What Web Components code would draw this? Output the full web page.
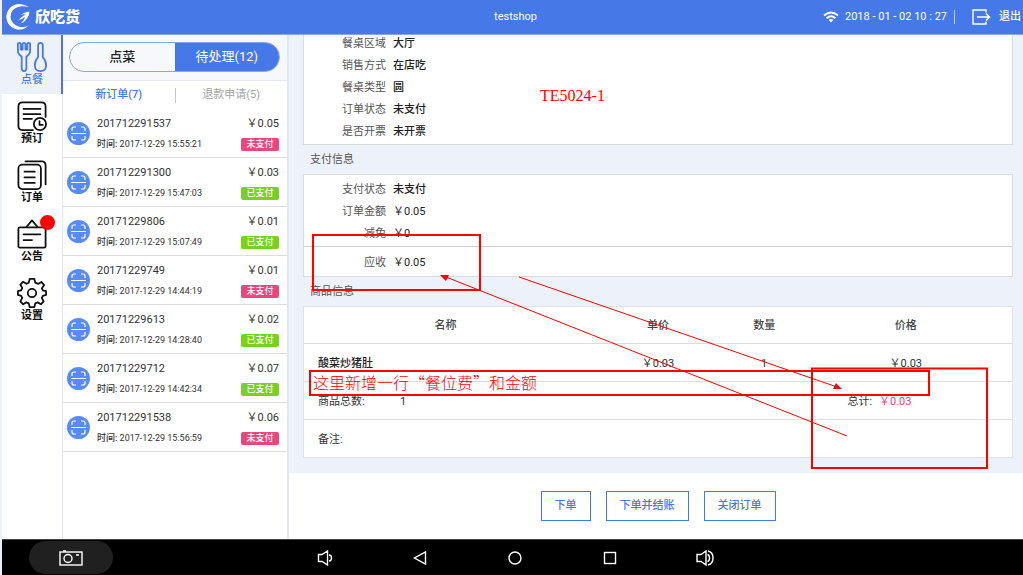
<!DOCTYPE html>
<html lang="zh-CN">
<head>
<meta charset="utf-8">
<title>欣吃货</title>
<style>
  html, body { margin: 0; height: 100%; }
  body {
    display: grid;
    font: 11px/16px Roboto, "Noto Sans CJK SC", sans-serif;
    color: #333;
    background: #edf2fa;
  }
</style>
</head>
<body>
<pos-app></pos-app>

<script>
const define = (name, html, setup) => {
  const template = document.createElement('template');
  template.innerHTML = html;
  customElements.define(name, class extends HTMLElement {
    constructor() {
      super();
      this.attachShadow({ mode: 'open' }).append(template.content.cloneNode(true));
    }
    connectedCallback() { if (setup) setup(this, this.shadowRoot); }
  });
};

/* ---------- top bar ---------- */
define('top-bar', `
<style>
  :host { display: grid; grid-template-columns: 1fr auto 1fr; align-items: center; height: 34px; background: #4778e7; border-bottom: 1px solid #86a6ee; color: #fff; }
  .brand { display: flex; align-items: center; gap: 4px; padding-left: 2px; font-size: 15px; line-height: 20px; font-weight: 900; }
  .title { padding-left: 6px; }
  .right { display: flex; justify-content: flex-end; align-items: center; padding-right: 2px; }
  .right svg { display: block; }
  time { margin: 0 7px 0 6px; white-space: pre; }
  i { width: 1px; height: 14px; background: #b9ccf7; margin-right: 17px; }
  a { display: flex; align-items: center; gap: 8px; color: #fff; text-decoration: none; font-weight: 500; }
</style>
<div class="brand">
  <svg width="27" height="28" viewBox="0 0 27 28" fill="#fff">
    <path d="M25 4.500Q21 1 14.500 1A12.800 12.800 0 1 0 24.500 22.500Q20 25 14.500 23.500Q7 20.500 6.500 14Q7 6 14 4Q19.500 2.500 25 4.500Z"/>
    <path d="M16.500 12Q20 9 25.500 8.500Q25.500 12.500 23 15.500Q21 19 16.500 20.500Q20.500 17 21 14Q18 16.500 14.500 17Q18 13.500 21.500 11.500Q19 11 16.500 12Z"/>
  </svg>
  <span>欣吃货</span>
</div>
<div class="title">testshop</div>
<div class="right">
  <svg width="16" height="12" viewBox="0 0 16 12" fill="none" stroke="#fff" stroke-width="2">
    <path d="M1 4.500Q8-1.500 15 4.500M3.500 7.200Q8 3.200 12.500 7.200"/><path d="M5.600 8.900Q8 7 10.400 8.900L8 11.500Z" fill="#fff" stroke="none"/>
  </svg>
  <time>2018 - 01 - 02 10 : 27</time><i></i>
  <a href="#exit">
    <svg width="19" height="16" viewBox="0 0 19 16" fill="none" stroke="#fff" stroke-width="1.400"><path d="M14 3.500V1H1V15H14V12.500M5 8H17.500M14 4.500L17.500 8L14 11.500"/></svg>
    <span>退出</span>
  </a>
</div>`);

/* ---------- side navigation ---------- */
define('side-item', `
<style>
  :host { display: block; height: 59px; color: #111; }
  a { display: flex; flex-direction: column; align-items: center; box-sizing: border-box; height: 100%; padding-top: 7px; color: inherit; text-decoration: none; font-weight: 700; border-right: 1px solid #e3e6ec; position: relative; }
  ::slotted(svg) { display: block; width: 30px; height: 30px; }
  :host([active]) { color: #4778e7; background: #edf2fa; }
  :host([active]) a { border-right-color: #4778e7; box-shadow: inset -1px 0 #4778e7; font-weight: 500; }
  b { display: none; position: absolute; right: 7px; top: 3px; width: 15px; height: 15px; border-radius: 50%; background: #f00; }
  :host([alert]) b { display: block; }
</style>
<a href="#"><slot name="icon"></slot><span><slot></slot></span><b></b></a>`);

define('side-nav', `
<style>
  :host { display: flex; flex-direction: column; background: #fff; }
  .rest { flex: 1; border-right: 1px solid #e3e6ec; }
  svg { fill: none; stroke: currentColor; stroke-width: 1.900; stroke-linecap: round; stroke-linejoin: round; }
</style>
<side-item active><svg slot="icon" viewBox="0 0 32 32"><path d="M1 2V9Q1 13 5 15.500V28Q5 31 7.500 31Q10 31 10 28V15.500Q14 13 14 9V2Q14 1 12.500 1Q11 1 11 2V8H9V2Q9 1 7.500 1Q6 1 6 2V8H4V2Q4 1 2.500 1Q1 1 1 2ZM25 1Q27.500 1 27.500 4V16Q31 20 31 25Q31 31 25 31Q19 31 19 25Q19 20 22.500 16V4Q22.500 1 25 1Z"/></svg>点餐</side-item>
<side-item><svg slot="icon" viewBox="0 0 32 32"><path d="M17 31H6Q1.500 31 1.500 27V6Q1.500 1.500 6 1.500H26Q30.500 1.500 30.500 6V17M7 8.500H25M7 14H25M7 19H16"/><circle cx="24.500" cy="24.500" r="6.500"/><path d="M24 21.500V25.500H27.500"/></svg>预订</side-item>
<side-item><svg slot="icon" viewBox="0 0 32 32"><rect x="1.500" y="5" width="24" height="26" rx="4"/><path d="M9 1.500H27Q30.500 2 30.500 6V26M8 12.500H19M8 18.500H19M8 24.500H19"/></svg>订单</side-item>
<side-item alert><svg slot="icon" viewBox="0 0 32 32"><rect x="1.500" y="9" width="29" height="21.500" rx="1.500"/><path d="M10 8.500L16 1.500L22 8.500M7 16.500H25M7 22.500H16"/></svg>公告</side-item>
<side-item><svg slot="icon" viewBox="0 0 32 32"><circle cx="16" cy="16" r="4.500"/><path d="M13.500 1H18.500L19.500 5L22.500 6.300L26 4.200L29 7.500L26.500 11L27.500 13.200L31 14V18L27.500 19L26.500 21.500L28.500 25L25.500 28L22 26L19.500 27L18.500 31H13.500L12.500 27L10 26L6.500 28L3.500 25L5.500 21.500L4.500 19L1 18V14L4.500 13.200L5.500 10.500L3.500 7L6.500 4L10 6.200L12.500 5Z"/></svg>设置</side-item>
<div class="rest"></div>`);

/* ---------- order list ---------- */
define('order-row', `
<style>
  :host { display: grid; grid-template-columns: 23px 1fr auto; align-items: center; column-gap: 7px; box-sizing: border-box; height: 49px; padding: 0 8px 0 4px; border-bottom: 1px solid #dcdcdc; }
  .text, .side { display: flex; flex-direction: column; gap: 4px; padding-top: 2px; }
  .side { align-items: flex-end; }
  .when { font-size: 9px; }
  .when b { font-weight: 500; }
  .state { display: flex; height: 16px; align-items: center; }
  .state span { width: 38px; height: 13px; line-height: 13px; border-radius: 2px; background: #e8467c; color: #fff; font-size: 9px; font-weight: 500; text-align: center; }
  :host([paid]) .state span { background: #7ad022; }
  svg { display: block; }
</style>
<svg width="23" height="23" viewBox="0 0 23 23"><circle cx="11.500" cy="11.500" r="11.500" fill="#588bfa"/><path d="M5 9V7Q5 5 7 5H9M14 5H16Q18 5 18 7V9M5 14V16Q5 18 7 18H9M14 18H16Q18 18 18 16V14M4 11.500H19" fill="none" stroke="#fff" stroke-width="1.200"/></svg>
<div class="text"><span class="no"></span><span class="when"><b>时间:</b> <span class="t"></span></span></div>
<div class="side"><span class="price"></span><span class="state"><span class="s"></span></span></div>`,
(el, root) => {
  root.querySelector('.no').textContent = el.getAttribute('no');
  root.querySelector('.t').textContent = '2017-12-29 ' + el.getAttribute('time');
  root.querySelector('.price').textContent = '￥' + el.getAttribute('price');
  root.querySelector('.s').textContent = el.hasAttribute('paid') ? '已支付' : '未支付';
});

define('order-panel', `
<style>
  :host { display: block; background: #fff; border-right: 2px solid #e3e6ec; }
  button { font: inherit; background: none; border: 0; padding: 0; color: inherit; }
  .modes { background: #f7f8fc; padding: 7px 7px 8px 6px; border-bottom: 1px solid #e3e6ec; }
  .pill { display: grid; grid-template-columns: 1fr 1fr; height: 30px; box-sizing: border-box; border: 1px solid #86a6ee; border-radius: 15px; overflow: hidden; font-size: 13px; color: #222; }
  .pill button { font-weight: 500; }
  .pill .on { background: #4778e7; color: #fff; font-weight: 400; }
  .kinds { display: grid; grid-template-columns: 1fr 1px 1fr; align-items: center; height: 28px; color: #a3a3a3; }
  .kinds .on { color: #4778e7; font-weight: 500; }
  .kinds i { height: 15px; background: #c4c4c4; }
</style>
<div class="modes"><div class="pill"><button>点菜</button><button class="on">待处理(12)</button></div></div>
<div class="kinds"><button class="on">新订单(7)</button><i></i><button>退款申请(5)</button></div>
<order-row no="201712291537" price="0.05" time="15:55:21"></order-row>
<order-row no="201712291300" price="0.03" time="15:47:03" paid></order-row>
<order-row no="20171229806" price="0.01" time="15:07:49" paid></order-row>
<order-row no="20171229749" price="0.01" time="14:44:19"></order-row>
<order-row no="20171229613" price="0.02" time="14:28:40" paid></order-row>
<order-row no="20171229712" price="0.07" time="14:42:34" paid></order-row>
<order-row no="201712291538" price="0.06" time="15:56:59"></order-row>`);

/* ---------- order detail ---------- */
define('info-row', `
<style>
  :host { display: grid; grid-template-columns: 82px 1fr; column-gap: 7px; }
  .k { text-align: right; color: #555; }
  .v { font-weight: 500; color: #222; }
  :host([money]) .v { font-weight: 400; }
</style>
<span class="k"></span><span class="v"><slot></slot></span>`,
(el, root) => { root.querySelector('.k').textContent = el.getAttribute('label'); });

define('info-card', `
<style>
  :host { display: flex; flex-direction: column; gap: 6px; background: #fff; border: 1px solid #d8dadd; padding: 7px 0 4px; }
  :host([scrolled]) { border-top: 0; padding-top: 1px; }
  :host([joined]) { border-top-color: #ccc; margin-top: -1px; padding-top: 8px; padding-bottom: 5px; }
</style>
<slot></slot>`);

define('item-table', `
<style>
  :host { display: block; background: #fff; border: 1px solid #dfe1e5; }
  table { width: 100%; border-collapse: collapse; table-layout: fixed; }
  th, td { height: 35px; padding: 2px 0 0; text-align: center; font-weight: 400; border-bottom: 1px solid #dcdcdc; }
  th { height: 34px; color: #444; font-weight: 500; }
  .name, tfoot td { text-align: left; padding-left: 14px; }
  .name { font-weight: 500; color: #222; }
  tfoot tr:last-child td { border-bottom: 0; }
  .count { display: inline-block; width: 82px; }
  tfoot .total { padding-left: 48px; }
  .total b { color: #e8467c; font-weight: 400; margin-left: 4px; }
</style>
<table>
  <colgroup><col style="width:40%"><col style="width:20%"><col style="width:10%"><col style="width:30%"></colgroup>
  <thead><tr><th>名称</th><th>单价</th><th>数量</th><th>价格</th></tr></thead>
  <tbody><tr><td class="name">酸菜炒猪肚</td><td>￥0.03</td><td>1</td><td>￥0.03</td></tr></tbody>
  <tfoot>
    <tr><td colspan="3"><span class="count">商品总数:</span>1</td><td class="total">总计: <b>￥0.03</b></td></tr>
    <tr><td colspan="4">备注:</td></tr>
  </tfoot>
</table>`);

/* review marks that lie over the order detail */
define('review-marks', `
<style>
  :host { position: absolute; left: 0; top: 0; width: 734px; height: 440px; pointer-events: none; color: #f00; }
  svg { position: absolute; left: 0; top: 0; }
  p { position: absolute; margin: 0; font-size: 16px; line-height: 20px; white-space: nowrap; }
  .model { left: 251px; top: 51px; font-family: "Liberation Serif", serif; }
  .note { left: 24px; top: 337px; font-family: "Noto Sans CJK SC", sans-serif; font-weight: 300; }
</style>
<svg width="734" height="440" viewBox="289 35 734 440" fill="none" stroke="#f00">
  <rect x="313" y="235" width="167" height="55" stroke-width="2"/>
  <rect x="310" y="371" width="619" height="24" stroke-width="2"/>
  <rect x="812" y="368.500" width="175" height="99.500" stroke-width="2"/>
  <path d="M847 436L446 277M519 277L837 387"/>
  <path d="M440 275L449 275L446 281ZM842 389L833 389L836 383Z" fill="#f00" stroke="none"/>
</svg>
<p class="model">TE5024-1</p>
<p class="note">这里新增一行“餐位费”和金额</p>`);

define('order-detail', `
<style>
  :host { display: flex; flex-direction: column; position: relative; min-width: 0; }
  .body { padding: 0 10px 15px 14px; background: #edf2fa; }
  h2 { box-sizing: border-box; height: 29px; margin: 0; padding: 7px 0 0 7px; font-size: 11px; line-height: 16px; font-weight: 400; color: #555; }
  .actions { flex: 1; display: flex; justify-content: center; align-items: center; gap: 15px; padding-left: 4px; background: #fff; }
  button { font: inherit; font-weight: 500; height: 30px; padding: 0 13px; color: #4778e7; background: #fff; border: 1px solid #4778e7; }
</style>
<div class="body">
  <info-card scrolled>
    <info-row label="餐桌区域">大厅</info-row>
    <info-row label="销售方式">在店吃</info-row>
    <info-row label="餐桌类型">圆</info-row>
    <info-row label="订单状态">未支付</info-row>
    <info-row label="是否开票">未开票</info-row>
  </info-card>
  <h2>支付信息</h2>
  <info-card>
    <info-row label="支付状态">未支付</info-row>
    <info-row label="订单金额" money>￥0.05</info-row>
    <info-row label="减免" money>￥0</info-row>
  </info-card>
  <info-card joined><info-row label="应收" money>￥0.05</info-row></info-card>
  <h2>商品信息</h2>
  <item-table></item-table>
</div>
<div class="actions"><button>下单</button><button>下单并结账</button><button>关闭订单</button></div>
<review-marks></review-marks>`);

/* ---------- system bar ---------- */
define('system-bar', `
<style>
  :host { display: grid; grid-template-columns: 1fr auto 1fr; align-items: center; height: 35px; background: #000; border-top: 1px solid #444; }
  button { display: flex; align-items: center; justify-content: center; padding: 0; border: 0; background: none; width: 95px; height: 33px; }
  .shot { width: 84px; margin-left: 27px; border-radius: 17px; background: #202020; }
  .keys { display: flex; padding-left: 4px; }
  svg { fill: none; stroke: #fff; stroke-width: 1.400; }
</style>
<button class="shot" aria-label="screenshot"><svg width="24" height="16" viewBox="0 0 24 16"><rect x="1" y="2" width="22" height="13"/><circle cx="9" cy="8.500" r="4"/><path d="M4 1H7M17 5H20"/></svg></button>
<div class="keys">
  <button aria-label="volume down"><svg width="16" height="16" viewBox="0 0 16 16"><path d="M1.500 4.500H5L10.500 1V15L5 11.500H1.500ZM12 5Q14.500 5 14.500 8Q14.500 11 12 11"/></svg></button>
  <button aria-label="back"><svg width="14" height="16" viewBox="0 0 14 16"><path d="M12.500 2V14L1.500 8Z"/></svg></button>
  <button aria-label="home"><svg width="14" height="14" viewBox="0 0 14 14"><circle cx="7" cy="7" r="6"/></svg></button>
  <button aria-label="recent"><svg width="14" height="14" viewBox="0 0 14 14"><rect x="1.500" y="1.500" width="11" height="11"/></svg></button>
  <button aria-label="volume up"><svg width="18" height="16" viewBox="0 0 18 16"><path d="M1 4.500H5L10 1V15L5 11.500H1ZM11.500 4.500Q13.500 5 13.500 8Q13.500 11 11.500 11.500M12 1Q17 2 17 8Q17 14 12 15"/></svg></button>
</div>`);

define('pos-app', `
<style>
  :host { display: flex; flex-direction: column; min-height: 100%; box-sizing: border-box; padding-left: 2px; }
  main { flex: 1; display: grid; grid-template-columns: 61px 226px 1fr; }
</style>
<top-bar></top-bar>
<main><side-nav></side-nav><order-panel></order-panel><order-detail></order-detail></main>
<system-bar></system-bar>`);
</script>
</body>
</html>
